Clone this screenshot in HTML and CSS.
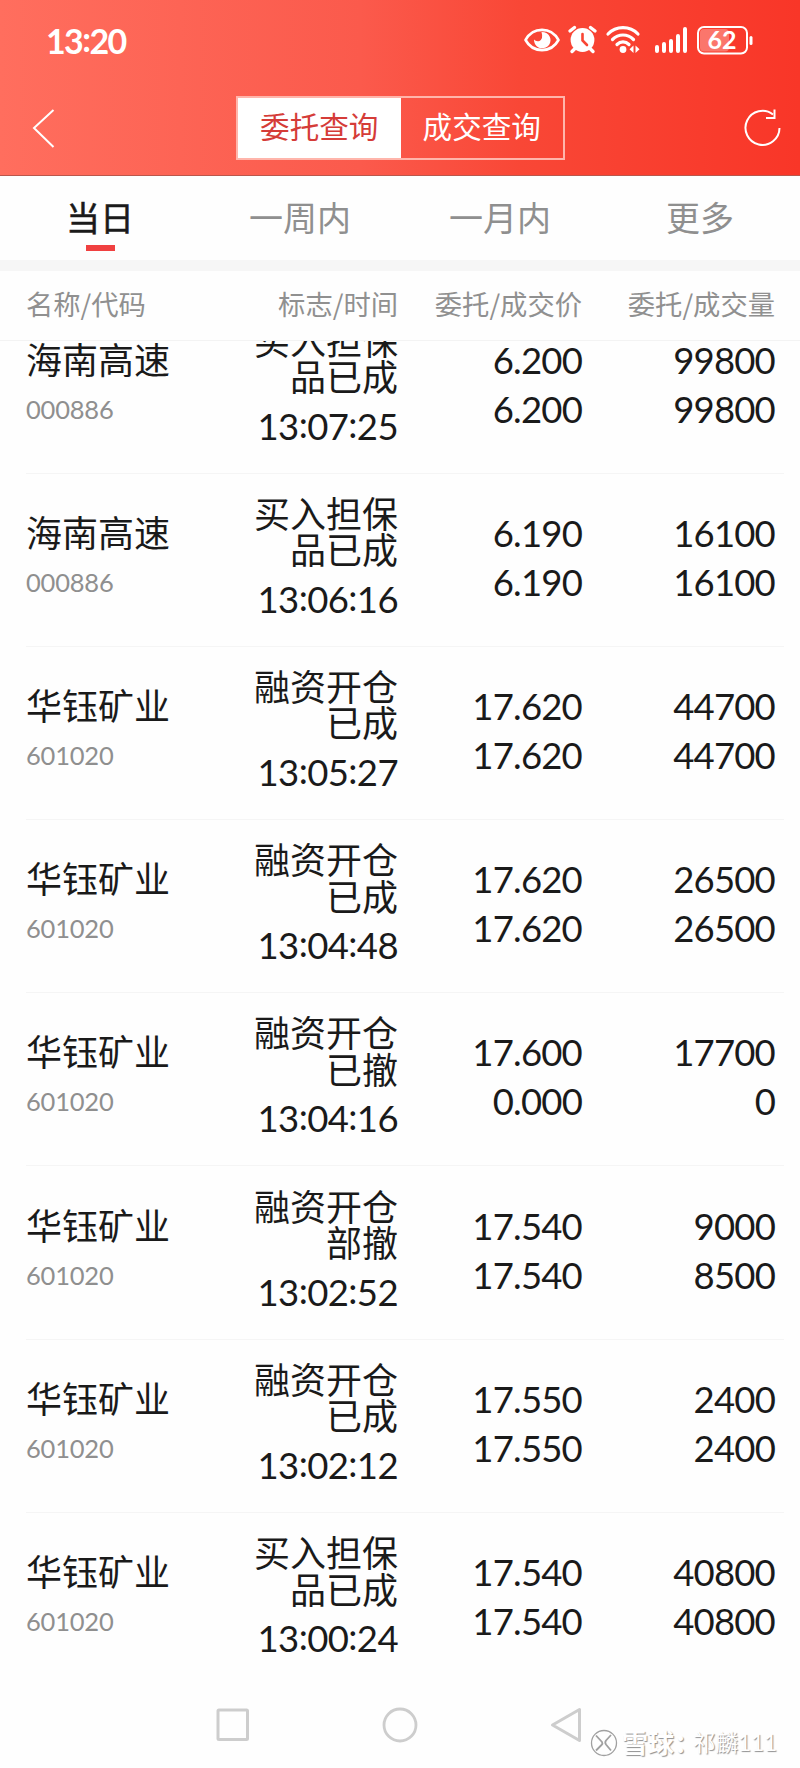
FILE: index.html
```html
<!DOCTYPE html>
<html lang="zh-CN">
<head>
    <meta charset="UTF-8">
    <meta name="viewport" content="width=device-width, initial-scale=1.0">
    <title>委托查询</title>
    <link rel="stylesheet" href="styles.css">
</head>
<body>
    <header>
        <div class="status-bar">
            <span class="clock">13<i>:</i>20</span>
            <svg class="status-icons" width="232" height="32" viewBox="0 0 232 32" fill="none" stroke="#fff" stroke-linecap="round">
                <!-- 护眼 -->
                <path d="M2.500 16C10 2.500 28 2.500 35.500 16C28 29.500 10 29.500 2.500 16Z" stroke-width="2.600" stroke-linejoin="round"/>
                <path d="M18.500 8C27 8 29.500 16 26 21C21 27 11 24.500 11 15.500Q13 18 16.500 17Q20.500 14.500 18.500 8Z" fill="#fff" stroke="none"/>
                <!-- 闹钟 -->
                <circle cx="59.500" cy="16" r="11.900" fill="#fff" stroke="none"/>
                <path d="M47 7L51.500 3.500M72 7L67.500 3.500M51.500 25L49 27.500M67.500 25L70 27.500" stroke-width="3.400"/>
                <path d="M59.500 10V16.500L64 21" stroke="#f94534" stroke-width="2.600"/>
                <!-- wifi -->
                <path d="M85 10C93 1.500 107 1.500 115 10M89.500 15.500C95.500 9.500 104.500 9.500 110.500 15.500M94 20.500C97.500 17 102.500 17 106 20.500" stroke-width="3.200"/>
                <circle cx="100" cy="25.500" r="3.400" fill="#fff" stroke="none"/>
                <path d="M110.500 21.500V29L106.500 25.200ZM112.500 21.500V29L116.500 25.200Z" fill="#fff" stroke="none"/>
                <!-- 信号 -->
                <path d="M134 23V27M141 20V27M148 17V27M155 12V27M162 5V27" stroke-width="4"/>
                <!-- 电池 -->
                <rect x="175" y="3" width="49" height="26.500" rx="6" stroke-width="2"/>
                <rect x="177" y="5" width="29" height="22.500" rx="4" fill="#fff" fill-opacity=".3" stroke="none"/>
                <path d="M228 13.500V19.500" stroke-width="3"/>
                <text x="199" y="25" text-anchor="middle" class="battery">62</text>
            </svg>
        </div>
        <div class="nav-bar">
            <svg class="back" width="26" height="42" viewBox="0 0 26 42" fill="none" stroke="#fff" stroke-width="2">
                <path d="M21.500 3L2 21L21.500 40"/>
            </svg>
            <div class="switch">
                <span class="switch-item active">委托查询</span>
                <span class="switch-item">成交查询</span>
            </div>
            <svg class="refresh" width="38" height="40" viewBox="0 0 38 40" fill="none" stroke="#fff" stroke-width="2">
                <path d="M29 6.500A17 17 0 1 0 35.500 20"/>
                <path d="M30.500 1.500V10H22"/>
            </svg>
        </div>
    </header>

    <nav class="tabs">
        <span class="tab active">当日</span>
        <span class="tab">一周内</span>
        <span class="tab">一月内</span>
        <span class="tab">更多</span>
    </nav>

    <div class="columns table-head">
        <span>名称/代码</span>
        <span>标志/时间</span>
        <span>委托/成交价</span>
        <span>委托/成交量</span>
    </div>

    <main class="list">
        <div class="rows" id="rows"></div>
    </main>

    <footer>
        <svg width="38" height="38" viewBox="0 0 38 38" fill="none" stroke="#cdcdcd" stroke-width="3">
            <rect x="4" y="4" width="29.500" height="29.500" rx="1"/>
        </svg>
        <svg width="38" height="38" viewBox="0 0 38 38" fill="none" stroke="#cdcdcd" stroke-width="2.800">
            <circle cx="18" cy="19" r="16"/>
        </svg>
        <svg width="38" height="38" viewBox="0 0 38 38" fill="none" stroke="#cdcdcd" stroke-width="3" stroke-linejoin="round">
            <path d="M30.500 3.500V34.500L3.500 19Z"/>
        </svg>
        <div class="watermark">
            <svg width="28" height="28" viewBox="0 0 28 28" fill="none" stroke="#a0a0a0">
                <circle cx="14" cy="14" r="12.500" stroke-width="1.300"/>
                <path d="M6 6.500L12 13Q13 14.500 11.500 16L6 21.500M21 6L16 11.500Q14.500 13.500 16 15.500L21 21.500" stroke-width="1.800"/>
            </svg>
            <b>雪球：</b><span>祁麟111</span>
        </div>
    </footer>

    <script>
        // 名称, 代码, 标志(两行), 时间, 委托价, 成交价, 委托量, 成交量
        const orders = [
            ['海南高速', '000886', '买入担保', '品已成', '13:07:25', '6.200', '6.200', '99800', '99800'],
            ['海南高速', '000886', '买入担保', '品已成', '13:06:16', '6.190', '6.190', '16100', '16100'],
            ['华钰矿业', '601020', '融资开仓', '已成', '13:05:27', '17.620', '17.620', '44700', '44700'],
            ['华钰矿业', '601020', '融资开仓', '已成', '13:04:48', '17.620', '17.620', '26500', '26500'],
            ['华钰矿业', '601020', '融资开仓', '已撤', '13:04:16', '17.600', '0.000', '17700', '0'],
            ['华钰矿业', '601020', '融资开仓', '部撤', '13:02:52', '17.540', '17.540', '9000', '8500'],
            ['华钰矿业', '601020', '融资开仓', '已成', '13:02:12', '17.550', '17.550', '2400', '2400'],
            ['华钰矿业', '601020', '买入担保', '品已成', '13:00:24', '17.540', '17.540', '40800', '40800']
        ];

        document.getElementById('rows').innerHTML = orders.map(o => `
            <div class="columns row">
                <div class="pair">
                    <div class="name">${o[0]}</div>
                    <div class="code">${o[1]}</div>
                </div>
                <div>
                    <div class="flag">${o[2]}<br>${o[3]}</div>
                    <div class="time">${o[4].replace(/:/g, '<i>:</i>')}</div>
                </div>
                <div class="pair number"><div>${o[5]}</div><div>${o[6]}</div></div>
                <div class="pair number"><div>${o[7]}</div><div>${o[8]}</div></div>
            </div>
        `).join('');
    </script>
</body>
</html>
```
FILE: styles.css
```css
* {
    box-sizing: border-box;
}
body {
    margin: 0;
    height: 1768px;
    display: flex;
    flex-direction: column;
    overflow: hidden;
    background-color: #fefefe;
    color: #1a1a1a;
    font-family: Lato, "Noto Sans CJK SC", sans-serif;
}
i {
    font-style: normal;
    position: relative;
    top: -2px;
}
svg {
    display: block;
    flex: none;
}
header {
    height: 176px;
    flex: none;
    background: linear-gradient(to right, #ff6e5e, #fb5a4c 45%, #f94736 65%, #f93628);
    border-bottom: 1px solid #b9574c;
    color: #fff;
}
.status-bar {
    height: 80px;
    padding: 0 46px;
    display: flex;
    justify-content: space-between;
    align-items: center;
}
.clock {
    font-size: 34px;
    font-weight: bold;
    line-height: 40px;
    letter-spacing: -1.6px;
    padding-top: 1px;
}
.status-icons {
    margin-right: -1px;
}
.battery {
    font-size: 25px;
    font-weight: bold;
    fill: #fff;
    stroke: none;
}
.nav-bar {
    height: 95px;
    padding: 0 18px 0 32px;
    display: flex;
    justify-content: space-between;
    align-items: center;
}
.switch {
    width: 329px;
    height: 64px;
    margin-right: 1px;
    display: flex;
    border: 2px solid #ffb5ab;
}
.switch-item {
    flex: 1;
    text-align: center;
    font-size: 29.6px;
    line-height: 57px;
}
.switch-item.active {
    background: #fff;
    color: #d53c38;
}
.tabs {
    height: 95px;
    flex: none;
    display: grid;
    grid-template-columns: repeat(4, 1fr);
    border-bottom: 11px solid #f6f6f6;
    color: #8f8f8f;
    font-size: 34px;
    text-align: center;
    line-height: 84px;
}
.tab.active {
    color: #1a1a1a;
    -webkit-text-stroke: 0.5px #1a1a1a;
    display: flex;
    flex-direction: column;
    align-items: center;
}
.tab.active::after {
    content: "";
    width: 29px;
    height: 6px;
    margin-top: -15px;
    background: #f04040;
}
.columns {
    display: grid;
    grid-template-columns: 172px 200px 184px 193px;
    padding-left: 26px;
    align-items: center;
    text-align: right;
}
.columns > :first-child {
    text-align: left;
}
.table-head {
    height: 70px;
    flex: none;
    border-bottom: 1px solid #f3f3f3;
    padding-bottom: 4px;
    color: #909090;
    font-family: "Noto Sans CJK SC", sans-serif;
    font-size: 27.3px;
    line-height: 65px;
}
.list {
    height: 1327px;
    flex: none;
    overflow: hidden;
}
.rows {
    margin-top: -40.5px;
}
.row {
    height: 173.2px;
    margin: 0 16px 0 26px;
    padding-left: 0;
    border-bottom: 1px solid #f5f5f5;
    font-size: 36.5px;
    line-height: 49px;
}
.row:last-child {
    border-bottom: none;
}
.pair {
    padding-bottom: 4px;
}
.number {
    letter-spacing: -0.8px;
}
.name,
.flag {
    font-size: 36px;
}
.code {
    color: #8f8f8f;
    font-size: 25.5px;
    letter-spacing: -0.2px;
}
.flag {
    line-height: 36.5px;
}
.time {
    margin-top: 6px;
    letter-spacing: -0.6px;
}
footer {
    height: 100px;
    flex: none;
    padding: 14px 213px 0 214px;
    display: flex;
    justify-content: space-between;
    align-items: center;
    position: relative;
}
/* 浮在导航栏上的水印 */
.watermark {
    position: absolute;
    left: 590px;
    top: 61px;
    display: flex;
    align-items: center;
    color: #fff;
    font-size: 22.5px;
    line-height: 28px;
    text-shadow: 1px 1px 1px #909090;
}
.watermark b {
    margin: 0 -7px 0 4px;
    font-size: 26px;
}
```
